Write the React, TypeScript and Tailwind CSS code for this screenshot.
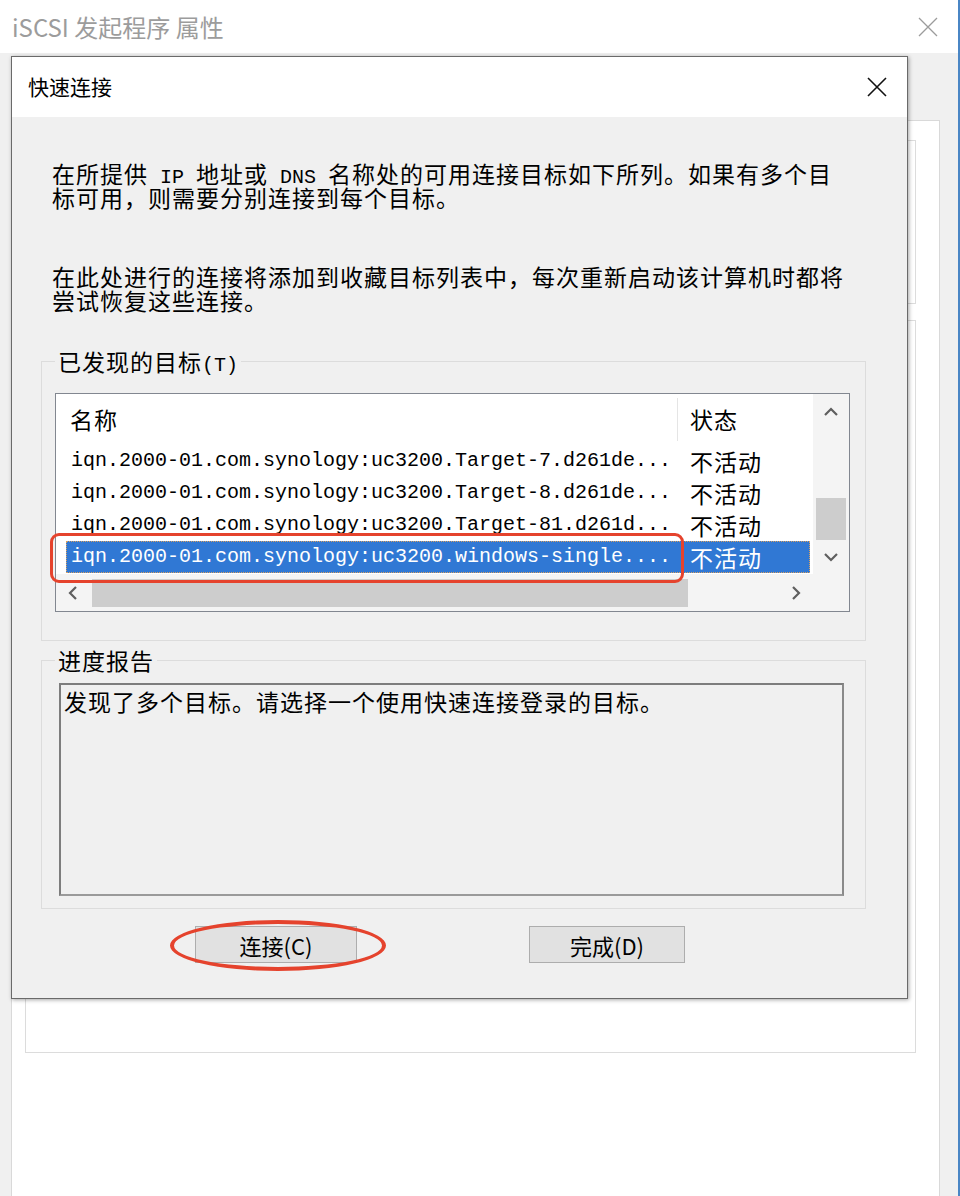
import React from "react";

const cjk = "font-['Noto_Sans_CJK_SC','Noto_Sans',sans-serif]";
const mono = "font-['Liberation_Mono','Noto_Sans_CJK_SC',monospace]";

type Target = { name: string; status: string; selected?: boolean };

const targets: Target[] = [
  { name: "iqn.2000-01.com.synology:uc3200.Target-7.d261de...", status: "不活动" },
  { name: "iqn.2000-01.com.synology:uc3200.Target-8.d261de...", status: "不活动" },
  { name: "iqn.2000-01.com.synology:uc3200.Target-81.d261d...", status: "不活动" },
  { name: "iqn.2000-01.com.synology:uc3200.windows-single....", status: "不活动", selected: true },
];

const Chevron = ({ dir }: { dir: "up" | "down" | "left" | "right" }) => {
  const paths = {
    up: "M2 10 L8 4 L14 10",
    down: "M2 5 L8 11 L14 5",
    left: "M10 2 L4 8 L10 14",
    right: "M6 2 L12 8 L6 14",
  };
  return (
    <svg width="16" height="16" viewBox="0 0 16 16">
      <path d={paths[dir]} fill="none" stroke="#5f5f5f" strokeWidth="2.2" />
    </svg>
  );
};

const CloseIcon = ({ color, size, stroke }: { color: string; size: number; stroke: number }) => (
  <svg width={size} height={size} viewBox="0 0 20 20">
    <path d="M1 1 L19 19 M19 1 L1 19" stroke={color} strokeWidth={stroke} fill="none" />
  </svg>
);

// ascii bits inside CJK text, half-width like the original dialog font
const Mono = ({ children }: { children: React.ReactNode }) => (
  <span className={`${mono} text-[20px] leading-[0px] tracking-normal whitespace-pre`}>{children}</span>
);

const App = () => {
  return (
    <div className="relative w-[960px] h-[1196px] overflow-hidden bg-[#f0f0f0] border-r-2 border-[#4a86c5]">
      {/* background window: iSCSI properties */}
      <div className="h-[53px] bg-white flex items-center justify-between pl-[12px] pr-[20px]">
        <span className={`${cjk} text-[24px] leading-none text-[#9c9c9c]`}>iSCSI 发起程序 属性</span>
        <CloseIcon color="#9c9c9c" size={20} stroke={1.3} />
      </div>
      <div className="pl-[11px] pr-[18px] pt-[67px]">
        <div className="bg-white border border-[#d9d9d9] h-[1100px] pt-[19px] pl-[13px] pr-[23px]">
          <div className="border border-[#dcdcdc] h-[164px]" />
          <div className="mt-[16px] border border-[#dcdcdc] h-[733px]" />
        </div>
      </div>

      {/* quick connect dialog */}
      <div className="absolute left-[11px] top-[56px] w-[897px] h-[943px] border border-[#6a6a6a] shadow-[1px_1px_4px_rgba(0,0,0,0.35)] flex flex-col">
        <div className="h-[60px] bg-white flex items-center justify-between pl-[16px] pr-[20px]">
          <span className={`${cjk} text-[21px] text-black`}>快速连接</span>
          <CloseIcon color="#111" size={20} stroke={1.6} />
        </div>

        <div className={`flex-1 bg-[#f0f0f0] pl-[29px] pt-[44px] ${cjk} text-[23px] tracking-[1px] text-black`}>
          <div className="ml-[11px] leading-[24px] whitespace-nowrap">
            <div className="h-[24px]">
              在所提供<Mono> IP </Mono>地址或<Mono> DNS </Mono>名称处的可用连接目标如下所列。如果有多个目
            </div>
            <div className="h-[24px]">标可用，则需要分别连接到每个目标。</div>
          </div>
          <div className="ml-[11px] mt-[55px] leading-[24px] whitespace-nowrap">
            <div className="h-[24px]">在此处进行的连接将添加到收藏目标列表中，每次重新启动该计算机时都将</div>
            <div className="h-[24px]">尝试恢复这些连接。</div>
          </div>

          {/* discovered targets */}
          <fieldset className="mt-[37px] w-[825px] border border-[#dcdcdc] pl-[13px] pr-[14px] pt-[20px] pb-[28px]">
            <legend className="px-[3px] leading-[24px]">
              已发现的目标<Mono>(T)</Mono>
            </legend>
            <div className="w-[795px] h-[219px] border border-[#828790] bg-white flex flex-col">
              <div className="flex h-[180px]">
                <div className="w-[757px] flex flex-col">
                  <div className="h-[51px] flex">
                    <div className="w-[622px] pl-[14px] my-[4px] flex items-center border-r border-[#e5e5e5]">名称</div>
                    <div className="pl-[12px] flex items-center">状态</div>
                  </div>
                  <div className="pl-[10px]">
                    {targets.map(t => (
                      <div
                        key={t.name}
                        className={
                          t.selected
                            ? "h-[32px] w-[744px] flex items-center bg-[#3078d4] text-white outline outline-1 outline-dotted outline-[#d8a060] -outline-offset-1"
                            : "h-[32px] w-[744px] flex items-center"
                        }
                      >
                        <div className={`w-[612px] pl-[5px] ${mono} text-[20px] tracking-normal whitespace-pre`}>{t.name}</div>
                        <div className="pl-[12px]">{t.status}</div>
                      </div>
                    ))}
                  </div>
                </div>
                <div className="w-[36px] bg-[#f4f4f4] flex flex-col">
                  <div className="h-[38px] flex items-center justify-center">
                    <Chevron dir="up" />
                  </div>
                  <div className="flex-1 flex flex-col justify-end px-[3px]">
                    <div className="h-[42px] bg-[#cdcdcd]" />
                  </div>
                  <div className="h-[34px] flex items-center justify-center">
                    <Chevron dir="down" />
                  </div>
                </div>
              </div>
              <div className="h-[37px] flex bg-[#f4f4f4]">
                <div className="w-[36px] flex items-center justify-center">
                  <Chevron dir="left" />
                </div>
                <div className="flex-1 pt-[5px] pb-[4px]">
                  <div className="w-[596px] h-full bg-[#cdcdcd]" />
                </div>
                <div className="w-[36px] flex items-center justify-center">
                  <Chevron dir="right" />
                </div>
                <div className="w-[36px] bg-[#f4f4f4]" />
              </div>
            </div>
          </fieldset>

          {/* progress report */}
          <fieldset className="mt-[7px] w-[825px] border border-[#dcdcdc] pl-[13px] pr-[14px] pt-[11px] pb-[12px]">
            <legend className="px-[3px] leading-[24px]">进度报告</legend>
            <div className="ml-[4px] w-[785px] h-[213px] border-2 border-t-[#7d7d7d] border-l-[#7d7d7d] border-r-[#8a8a8a] border-b-[#9a9a9a] bg-[#f0f0f0] px-[3px] pt-[4px] leading-[24px] whitespace-nowrap">
              发现了多个目标。请选择一个使用快速连接登录的目标。
            </div>
          </fieldset>

          <div className="mt-[17px] flex">
            <button className="ml-[154px] w-[162px] h-[37px] bg-[#e1e1e1] border border-[#adadad] text-[22px] tracking-normal leading-none">
              连接(C)
            </button>
            <button className="ml-[172px] w-[156px] h-[37px] bg-[#e1e1e1] border border-[#adadad] text-[22px] tracking-normal leading-none">
              完成(D)
            </button>
          </div>
        </div>
      </div>

      {/* red annotations */}
      <div className="absolute left-[50px] top-[533px] w-[634px] h-[50px] border-[3px] border-[#e5432d] rounded-[9px]" />
      <div className="absolute left-[170px] top-[920px] w-[216px] h-[51px] border-[4px] border-[#e5432d] rounded-[50%]" />
    </div>
  );
};

export default App;
